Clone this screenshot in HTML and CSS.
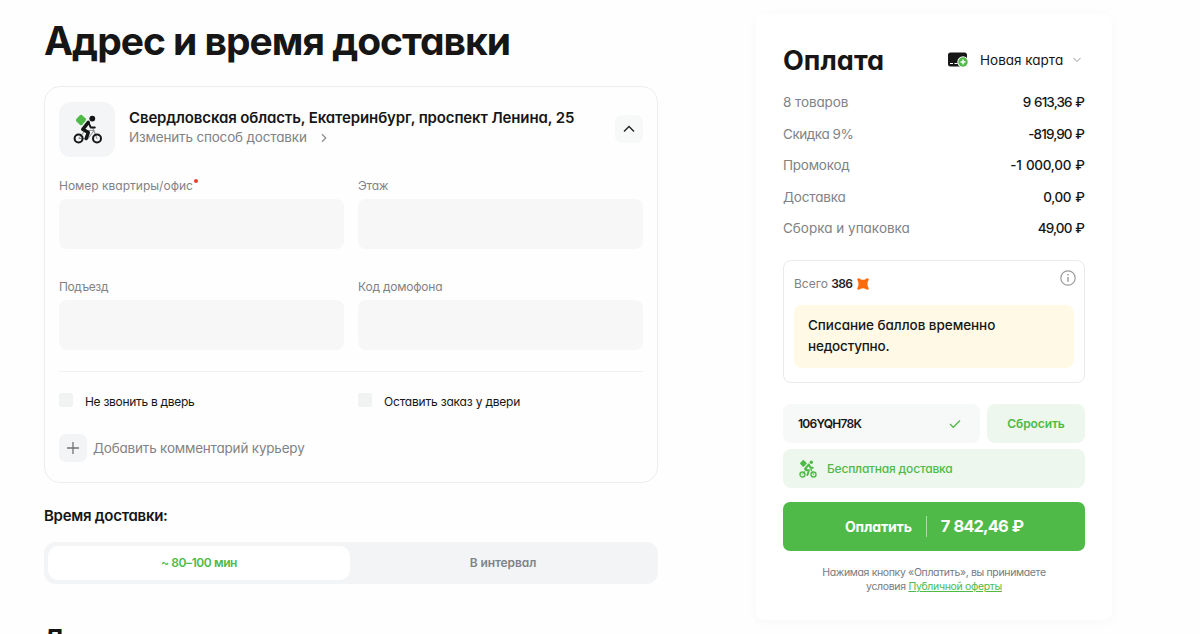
FILE: index.html
```html
<!DOCTYPE html>
<html lang="ru">
<head>
<meta charset="utf-8">
<title>Адрес и время доставки</title>
<link rel="stylesheet" href="styles.css">
</head>
<body>
<div class="page">
  <main class="delivery">
    <h1 class="title"><span class="t-title">Адрес и время доставки</span></h1>
    <section class="card">
      <header class="address">
        <div class="address-icon">
          <svg width="30" height="30" viewBox="0 0 30 30" fill="none" stroke="#161616" stroke-linecap="round" stroke-linejoin="round">
            <path d="M6.800 1.200q1.300-1 2.600.2l3 2.900q1.200 1.200.2 2.500l-3.200 4q-1.300 1-2.600-.1l-3.300-3.200q-1-1.200-.2-2.500z" fill="#4fba48" stroke="none"/>
            <circle cx="19.300" cy="4.600" r="2.900" fill="#161616" stroke="none"/>
            <path d="M5.800 24.500L12 16.500h9.300M19.800 14l4.200 10.500M20.300 17.500L15 24.500H5.800" stroke="#999" stroke-width="1.100"/>
            <circle cx="5.600" cy="24.500" r="4" stroke-width="2"/>
            <circle cx="24" cy="24.500" r="4" stroke-width="2"/>
            <path d="M15.300 8.400L9.800 15.300l5.500 3.200-2.100 6" stroke-width="3.500"/>
            <path d="M15.700 9.200l2.100 4.300h4" stroke-width="1.900"/>
          </svg>
        </div>
        <div class="address-text">
          <div class="address-line"><span class="t-address">Свердловская область, Екатеринбург, проспект Ленина, 25</span></div>
          <div class="address-change"><span class="t-change">Изменить способ доставки</span>
            <svg width="6" height="10" viewBox="0 0 6 10" fill="none" stroke="#8b8f92" stroke-width="1.300"><path d="M1 1.200L4.800 5 1 8.800"/></svg>
          </div>
        </div>
        <button class="collapse" aria-label="Свернуть">
          <svg width="12" height="8" viewBox="0 0 12 8" fill="none" stroke="#222" stroke-width="1.400"><path d="M1 6.500L6 1.500l5 5"/></svg>
        </button>
      </header>
      <div class="fields">
        <label class="field"><span class="field-label"><span class="t-flat">Номер квартиры/офис</span><i class="required"></i></span><input class="input"></label>
        <label class="field"><span class="field-label"><span class="t-floor">Этаж</span></span><input class="input"></label>
        <label class="field"><span class="field-label"><span class="t-entrance">Подъезд</span></span><input class="input"></label>
        <label class="field"><span class="field-label"><span class="t-code">Код домофона</span></span><input class="input"></label>
      </div>
      <div class="options">
        <label class="option"><i class="box"></i><span class="t-opt1">Не звонить в дверь</span></label>
        <label class="option"><i class="box"></i><span class="t-opt2">Оставить заказ у двери</span></label>
      </div>
      <div class="comment">
        <span class="plus"><svg width="12" height="12" viewBox="0 0 12 12" stroke="#6f7376" stroke-width="1.300"><path d="M6 0v12M0 6h12"/></svg></span>
        <span class="t-comment">Добавить комментарий курьеру</span>
      </div>
    </section>
    <h2 class="time-title"><span class="t-time">Время доставки:</span></h2>
    <div class="tabs">
      <div class="tab tab-active"><span class="t-tab1">~ 80–100 мин</span></div>
      <div class="tab"><span class="t-tab2">В интервал</span></div>
    </div>
    <h2 class="next-title">Д</h2>
  </main>
  <aside class="payment">
    <header class="pay-head">
      <h2 class="pay-title"><span class="t-pay">Оплата</span></h2>
      <div class="method">
        <svg width="22" height="16" viewBox="0 0 22 16">
          <rect x="1" y=".5" width="19" height="14" rx="2.500" fill="#161616"/>
          <path d="M3 11.500h3M7.500 11.500h3" stroke="#fff" stroke-width="1.200"/>
          <circle cx="16" cy="10" r="5.700" fill="#fff"/>
          <circle cx="16" cy="10" r="4.700" fill="#4fba48"/>
          <path d="M16 7.500v5M13.500 10h5" stroke="#fff" stroke-width="1.500"/>
        </svg>
        <span class="method-name"><span class="t-method">Новая карта</span></span>
        <svg width="8" height="6" viewBox="0 0 8 6" fill="none" stroke="#92969a" stroke-width="1"><path d="M.5 1L4 4.500 7.500 1"/></svg>
      </div>
    </header>
    <dl class="sums">
      <div class="sum"><dt><span class="t-s1">8 товаров</span></dt><dd><span class="t-v1">9 613,36 ₽</span></dd></div>
      <div class="sum"><dt><span class="t-s2">Скидка 9%</span></dt><dd><span class="t-v2">-819,90 ₽</span></dd></div>
      <div class="sum"><dt><span class="t-s3">Промокод</span></dt><dd><span class="t-v3">-1 000,00 ₽</span></dd></div>
      <div class="sum"><dt><span class="t-s4">Доставка</span></dt><dd><span class="t-v4">0,00 ₽</span></dd></div>
      <div class="sum"><dt><span class="t-s5">Сборка и упаковка</span></dt><dd><span class="t-v5">49,00 ₽</span></dd></div>
    </dl>
    <section class="points">
      <div class="points-head">
        <span class="points-total"><span class="t-total">Всего</span> <b class="t-386">386</b></span>
        <svg class="points-icon" width="12" height="12" viewBox="0 0 12 12" fill="#ff6b0a"><path d="M1.300.2Q2.300 0 3.200.9 6 2.700 8.800.9 9.700 0 10.700.2q1.200.2 1.100 1.300-.1.800-.8 1.500-1.200 3 0 6 .7.700.8 1.500.1 1.100-1.100 1.300-1 .2-1.900-.7-2.800-1.800-5.600 0-.9.900-1.900.7Q.100 11.600.2 10.500.300 9.700 1 9q1.200-3 0-6Q.300 2.300.2 1.500.100.400 1.300.2z"/></svg>
        <svg class="info" width="16" height="16" viewBox="0 0 16 16" fill="none" stroke="#9a9a9a"><circle cx="8" cy="8" r="7.200" stroke-width="1.200"/><path d="M8 7v4.800M8 4v1.500" stroke-width="1.400"/></svg>
      </div>
      <p class="notice"><span class="t-n1">Списание баллов временно</span><br><span class="t-n2">недоступно.</span></p>
    </section>
    <div class="promo">
      <div class="promo-code"><span class="t-promo">106YQH78K</span>
        <svg width="12" height="10" viewBox="0 0 12 10" fill="none" stroke="#4fba48" stroke-width="1.300"><path d="M1 5l3.300 3.300L11 1.500"/></svg>
      </div>
      <button class="reset"><span class="t-reset">Сбросить</span></button>
    </div>
    <div class="free">
      <svg width="18" height="18" viewBox="0 0 18 18" fill="none" stroke="#4fba48" stroke-linecap="round" stroke-linejoin="round">
        <path d="M4.300 1L6.800 3.300 4.300 6 2 3.300z" fill="#4fba48" stroke-width="1.800"/>
        <circle cx="12.300" cy="2.300" r="1.700" fill="#4fba48" stroke="none"/>
        <circle cx="3.500" cy="14.500" r="2.500" stroke-width="1.400"/>
        <circle cx="14.500" cy="14.500" r="2.500" stroke-width="1.400"/>
        <path d="M3.500 14.500L7 9.800h5.500M12 9l2.500 5.500" stroke-width=".9"/>
        <path d="M9.800 4.500L6 9l3.700 2-1.300 4M10 5l1.600 2.800h2.200" stroke-width="2"/>
      </svg>
      <span class="t-free">Бесплатная доставка</span>
    </div>
    <button class="pay"><span class="pay-label t-buy">Оплатить</span><span class="pay-sum"><span class="t-sum">7 842,46 ₽</span></span></button>
    <p class="legal"><span class="t-l1">Нажимая кнопку «Оплатить», вы принимаете</span><br><span class="t-l2">условия <a class="offer">Публичной оферты</a></span></p>
  </aside>
</div>
</body>
</html>
```
FILE: styles.css
```css
* { box-sizing: border-box; }
body, h1, h2, p, dl, dd { margin: 0; }
body {
  height: 634px;
  overflow: hidden;
  background: #fdfefd;
  color: #161616;
  font-family: Inter, "Noto Sans", sans-serif;
  font-feature-settings: "cv11";
  font-size: 14px;
}
button, input { font: inherit; font-feature-settings: inherit; border: 0; padding: 0; margin: 0; }
svg { display: block; flex: none; }
span { white-space: nowrap; }

.page { display: flex; align-items: flex-start; padding-left: 44px; gap: 98px; height: 634px; overflow: hidden; }

.delivery { width: 614px; padding-top: 16px; }
.title { font-size: 39px; line-height: 50px; font-weight: 700; height: 70px; }
.card { height: 397px; padding: 15px 14px; border: 1px solid #eceeee; border-radius: 16px; background: #fefefe; }
.address { display: flex; height: 55px; }
.address-icon { width: 56px; height: 55px; border-radius: 12px; background: #f3f5f6; padding: 12px 0 0 14px; }
.address-text { flex: 1; padding: 6px 0 0 14px; }
.address-line { font-size: 15px; line-height: 20px; font-weight: 600; }
.address-change { display: flex; align-items: center; gap: 14px; font-size: 13.500px; line-height: 19px; color: #808386; }
.collapse { width: 28px; height: 28px; margin-top: 13px; border-radius: 7px; background: #f7f8f8; display: flex; align-items: center; justify-content: center; }

.fields { display: grid; grid-template-columns: 285px 285px; align-content: start; column-gap: 14px; row-gap: 28px; padding-top: 20px; height: 214px; }
.field { display: block; height: 73px; }
.field-label { display: flex; font-size: 12px; line-height: 18px; height: 22px; color: #808386; }
.required { width: 4px; height: 4px; margin: 2px 0 0 1px; border-radius: 2px; background: #e8402f; }
.input { display: block; width: 285px; height: 50px; border-radius: 8px; background: #f7f7f7; }

.options { display: grid; grid-template-columns: 285px 285px; column-gap: 14px; border-top: 1px solid #f0f1f1; padding-top: 20px; height: 63px; }
.option { display: flex; font-size: 12px; line-height: 19px; }
.box { width: 14px; height: 14px; margin: 1px 12px 0 0; border-radius: 2px; background: #f1f2f2; }
.comment { display: flex; align-items: center; gap: 6px; color: #808386; font-size: 13.500px; line-height: 28px; }
.plus { width: 28px; height: 28px; border-radius: 7px; background: #f2f4f5; display: flex; align-items: center; justify-content: center; }

.time-title { font-size: 15px; line-height: 20px; font-weight: 600; padding-top: 23px; height: 59px; }
.tabs { display: flex; height: 42px; padding: 4px; border-radius: 12px; background: #f2f4f5; }
.tab { flex: 1; text-align: center; font-size: 12px; line-height: 33px; font-weight: 600; color: #7f8386; }
.tab + .tab { padding-left: 2px; }
.tab-active { border-radius: 10px; background: #fff; color: #4fba48; }
.next-title { margin-left: -1px; font-size: 25px; line-height: 50px; font-weight: 700; padding-top: 30px; }

.payment { width: 356px; height: 606px; margin-top: 14px; padding: 29px 27px 0; border-radius: 8px; background: #fff; box-shadow: 0 2px 12px rgba(0, 0, 0, .03); }
.pay-head { display: flex; justify-content: space-between; height: 45px; }
.pay-title { font-size: 27px; line-height: 36px; font-weight: 700; }
.method { display: flex; align-items: center; height: 34px; padding-right: 4px; }
.method-name { width: 104px; padding-left: 11px; font-size: 13.500px; line-height: 16px; }
.sums { height: 172px; }
.sum { display: flex; justify-content: space-between; height: 31.500px; line-height: 28px; font-size: 13.500px; }
.sum dt { color: #808386; }
.sum dd { font-weight: 500; word-spacing: 1px; }

.points { height: 123px; border: 1px solid #e9ebeb; border-radius: 8px; padding: 9px 10px; }
.points-head { display: flex; align-items: flex-start; height: 35px; }
.points-total { font-size: 12px; line-height: 28px; color: #808386; }
.points-total b { color: #222; font-weight: 600; }
.points-icon { margin: 8px 0 0 5px; }
.info { margin: 0 -2px 0 auto; }
.notice { height: 63px; border-radius: 8px; background: #fff9e5; padding: 10px 14px; line-height: 21px; font-size: 13.500px; font-weight: 500; }

.promo { display: flex; gap: 7px; margin-top: 21px; height: 39px; }
.promo-code { width: 197px; border-radius: 8px; background: #f7f8f8; display: flex; align-items: center; justify-content: space-between; padding: 0 19px 0 15px; font-size: 12px; font-weight: 600; }
.reset { flex: 1; border-radius: 8px; background: #edf7ed; color: #4fba48; font-size: 12px; font-weight: 600; }
.free { display: flex; align-items: center; gap: 10px; height: 39px; margin-top: 6px; padding-left: 16px; border-radius: 8px; background: #edf7ed; color: #4fba48; font-size: 12px; font-weight: 500; }
.pay { display: flex; align-items: center; justify-content: center; width: 302px; height: 49px; margin-top: 14px; border-radius: 7px; background: #4fba48; color: #fff; font-weight: 700; }
.pay-label { font-size: 14px; padding-right: 14px; }
.pay-sum { border-left: 1px solid #a8dda4; padding-left: 14px; font-size: 16.500px; line-height: 21px; word-spacing: 1px; }
.legal { padding-top: 15px; text-align: center; font-size: 10.500px; line-height: 14px; color: #777b7e; }
.offer { color: #4fba48; text-decoration: underline; }

/* Tracking */
.t-title { letter-spacing: -1.02px; }
.t-address { letter-spacing: -.13px; }
.t-change { letter-spacing: -.17px; }
.t-flat { letter-spacing: 0; }
.t-floor { letter-spacing: -.25px; }
.t-entrance { letter-spacing: -.4px; }
.t-code { letter-spacing: -.2px; }
.t-opt1 { letter-spacing: -.3px; }
.t-opt2 { letter-spacing: -.2px; }
.t-comment { letter-spacing: -.2px; }
.t-time { letter-spacing: -.27px; }
.t-tab1 { letter-spacing: -.4px; }
.t-tab2 { letter-spacing: -.1px; }
.t-pay { letter-spacing: .05px; }
.t-method { letter-spacing: 0; }
.t-s1 { letter-spacing: -.1px; }
.t-s2 { letter-spacing: -.45px; }
.t-s3 { letter-spacing: -.25px; }
.t-s4 { letter-spacing: -.2px; }
.t-s5 { letter-spacing: 0; }
.t-v1 { letter-spacing: -.9px; padding-right: .9px; }
.t-v2 { letter-spacing: -.9px; padding-right: .9px; }
.t-v3 { letter-spacing: -.3px; padding-right: .3px; }
.t-v4 { letter-spacing: -.4px; padding-right: .4px; }
.t-v5 { letter-spacing: -.85px; padding-right: .85px; }
.t-total { letter-spacing: 0; }
.t-386 { letter-spacing: -.75px; }
.t-n1 { letter-spacing: -.05px; }
.t-n2 { letter-spacing: -.2px; }
.t-promo { letter-spacing: -.75px; }
.t-reset { letter-spacing: -.1px; }
.t-free { letter-spacing: -.2px; }
.t-buy { letter-spacing: -.15px; }
.t-sum { letter-spacing: -.9px; }
.t-l1 { letter-spacing: -.35px; }
.t-l2 { letter-spacing: -.33px; }
```
